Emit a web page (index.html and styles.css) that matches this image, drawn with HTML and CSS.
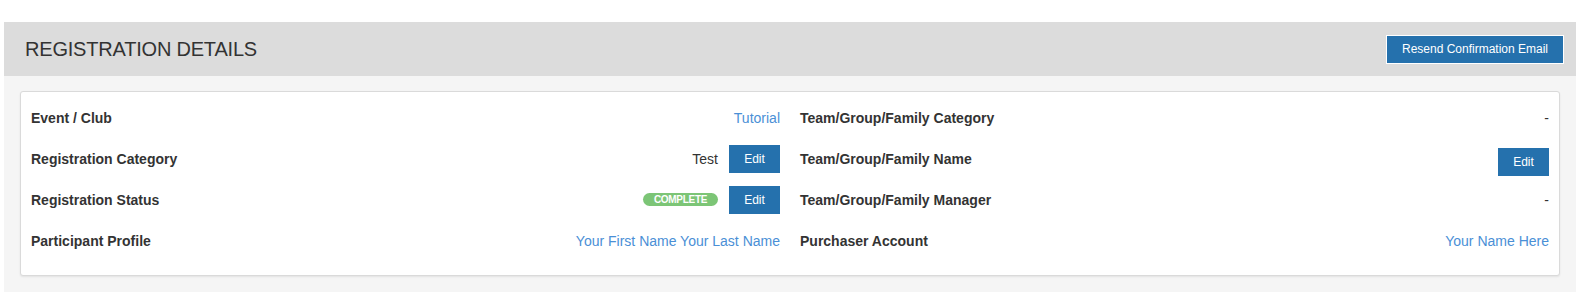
FILE: index.html
```html
<!DOCTYPE html>
<html lang="en">
<head>
    <meta charset="UTF-8">
    <meta name="viewport" content="width=device-width, initial-scale=1.0">
    <title>Registration Details</title>
    <link rel="stylesheet" href="styles.css">
</head>
<body>

    <div class="panel">
        <div class="panel-heading">
            <h2>REGISTRATION DETAILS</h2>
            <button class="btn btn-outline">Resend Confirmation Email</button>
        </div>

        <div class="panel-body">
            <div class="card">
                <div class="col">
                    <div class="row">
                        <span class="label">Event / Club</span>
                        <a class="value link" href="#">Tutorial</a>
                    </div>
                    <div class="row">
                        <span class="label">Registration Category</span>
                        <span class="value">Test <button class="btn">Edit</button></span>
                    </div>
                    <div class="row">
                        <span class="label">Registration Status</span>
                        <span class="value"><span class="badge">COMPLETE</span> <button class="btn">Edit</button></span>
                    </div>
                    <div class="row">
                        <span class="label">Participant Profile</span>
                        <a class="value link" href="#">Your First Name Your Last Name</a>
                    </div>
                </div>

                <div class="col">
                    <div class="row">
                        <span class="label">Team/Group/Family Category</span>
                        <span class="value">-</span>
                    </div>
                    <div class="row">
                        <span class="label">Team/Group/Family Name</span>
                        <span class="value"><button class="btn btn-low">Edit</button></span>
                    </div>
                    <div class="row">
                        <span class="label">Team/Group/Family Manager</span>
                        <span class="value">-</span>
                    </div>
                    <div class="row">
                        <span class="label">Purchaser Account</span>
                        <a class="value link" href="#">Your Name Here</a>
                    </div>
                </div>
            </div>
        </div>
    </div>

</body>
</html>
```

FILE: styles.css
```css
body {
    font-family: "Liberation Sans", Arial, sans-serif;
    font-size: 14px;
    color: #333;
    background-color: #fff;
    margin: 0;
    padding: 22px 10px 4px 4px;
}

.panel {
    width: 1572px;
    background-color: #f5f5f5;
}

.panel-heading {
    display: flex;
    align-items: center;
    justify-content: space-between;
    height: 54px;
    padding: 0 12px 0 21px;
    background-color: #dcdcdc;
}

.panel-heading h2 {
    margin: 0;
    font-size: 20px;
    font-weight: normal;
    color: #333;
    letter-spacing: -0.2px;
}

.panel-body {
    padding: 15px 16px 16px 16px;
}

.card {
    display: flex;
    background-color: #fff;
    border: 1px solid #dadada;
    border-radius: 3px;
    box-shadow: 0 1px 2px rgba(0, 0, 0, 0.08);
    padding: 5px 0 14px 0;
}

.col {
    flex: 1;
    padding: 0 10px;
}

.row {
    display: flex;
    align-items: center;
    justify-content: space-between;
    height: 41px;
}

.label {
    font-weight: bold;
}

.value {
    display: flex;
    align-items: center;
    gap: 11px;
}

.link {
    color: #4a8fd6;
    text-decoration: none;
}

.btn {
    font-family: "Liberation Sans", Arial, sans-serif;
    font-size: 12px;
    color: #fff;
    background-color: #2571ad;
    border: none;
    height: 28px;
    width: 51px;
    padding: 0;
    cursor: pointer;
}

.btn-outline {
    width: 178px;
    height: 29px;
    border: 1px solid #fff;
}

.btn-low {
    margin-top: 6px;
}

.badge {
    display: inline-block;
    width: 75px;
    height: 13px;
    line-height: 13px;
    text-align: center;
    font-size: 10px;
    font-weight: bold;
    letter-spacing: -0.3px;
    color: #fff;
    background-color: #7cc576;
    border-radius: 7px;
}
```
